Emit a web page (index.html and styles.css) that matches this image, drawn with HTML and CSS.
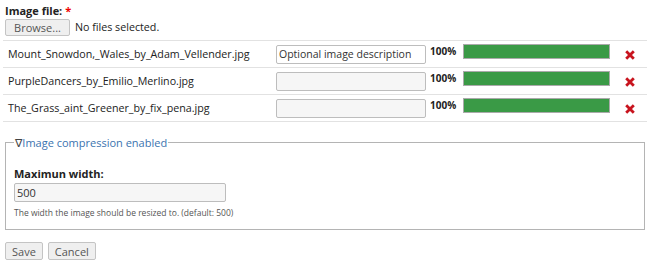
FILE: index.html
```html
<!DOCTYPE html>
<html>
<head>
<meta charset="utf-8">
<link rel="stylesheet" href="styles.css">
</head>
<body>
<div class="page">
  <div class="field">
    <div class="label">Image file: <span class="req">*</span></div>
    <div class="file-row">
      <button class="btn browse">Browse...</button>
      <span class="nofile">No files selected.</span>
    </div>
  </div>
  <div class="files">
    <div class="row">
      <div class="name">Mount_Snowdon,_Wales_by_Adam_Vellender.jpg</div>
      <input class="desc white" type="text" value="Optional image description">
      <div class="pct">100%</div>
      <div class="bar"><div class="fill" style="width:100%"></div></div>
      <div class="del"><svg width="10" height="10" viewBox="0 0 10 10"><path d="M1.2 1.2 L8.8 8.8 M8.8 1.2 L1.2 8.8" stroke="#c8141e" stroke-width="2.8" stroke-linecap="butt"/></svg></div>
    </div>
    <div class="row">
      <div class="name">PurpleDancers_by_Emilio_Merlino.jpg</div>
      <input class="desc" type="text" value="">
      <div class="pct">100%</div>
      <div class="bar"><div class="fill" style="width:100%"></div></div>
      <div class="del"><svg width="10" height="10" viewBox="0 0 10 10"><path d="M1.2 1.2 L8.8 8.8 M8.8 1.2 L1.2 8.8" stroke="#c8141e" stroke-width="2.8" stroke-linecap="butt"/></svg></div>
    </div>
    <div class="row">
      <div class="name">The_Grass_aint_Greener_by_fix_pena.jpg</div>
      <input class="desc" type="text" value="">
      <div class="pct">100%</div>
      <div class="bar"><div class="fill" style="width:100%"></div></div>
      <div class="del"><svg width="10" height="10" viewBox="0 0 10 10"><path d="M1.2 1.2 L8.8 8.8 M8.8 1.2 L1.2 8.8" stroke="#c8141e" stroke-width="2.8" stroke-linecap="butt"/></svg></div>
    </div>
  </div>
  <fieldset class="fs">
    <legend class="legend"><span class="tri">∇</span>Image compression enabled</legend>
    <div class="label">Maximun width:</div>
    <input class="width-input" type="text" value="500">
    <div class="help">The width the image should be resized to. (default: 500)</div>
  </fieldset>
  <div class="actions">
    <button class="btn">Save</button>
    <button class="btn">Cancel</button>
  </div>
</div>
</body>
</html>
```
FILE: styles.css
```css
* { box-sizing: border-box; }
body {
  margin: 0;
  font-family: "Open Sans", "DejaVu Sans", sans-serif;
  font-size: 10.7px;
  line-height: 15px;
  color: #222;
  background: #fff;
}
.page { padding: 3px 5px 0 5px; }
.label { font-weight: bold; line-height: 15px; font-size: 11px; }
.req { color: #e00; }
.file-row { display: flex; align-items: center; gap: 5px; margin-top: 1px; }
.btn {
  font-family: "Open Sans", "DejaVu Sans", sans-serif;
  font-size: 11px;
  color: #555;
  background: #efefef;
  border: 1px solid #c4c4c4;
  border-radius: 2px;
  height: 17px;
  padding: 0 6px;
  line-height: 15px;
}
.browse { width: 65px; padding: 0; }
.files { margin: 4px -2px 0 -2px; }
.row {
  display: grid;
  grid-template-columns: 273px 150px 37px 147px 1fr;
  align-items: center;
  height: 27px;
  border-top: 1px solid #e2e2e2;
}
.row:last-child { border-bottom: 1px solid #e2e2e2; height: 28px; }
.name { padding-left: 5px; white-space: nowrap; }
.desc {
  height: 19px;
  width: 150px;
  border: 1px solid #bdbdbd;
  border-radius: 2px;
  background: #f6f6f6;
  font-family: "Open Sans", "DejaVu Sans", sans-serif;
  font-size: 10.5px;
  padding: 0 3px 0 2px;
  color: #333;
}
.desc.white { background: #fff; }
.pct { font-weight: bold; font-size: 10px; padding-left: 4px; align-self: start; margin-top: 3px; }
.bar {
  height: 15px;
  border: 1px solid #aaa;
  background: #eee;
  align-self: start;
  margin-top: 3px;
}
.fill { height: 100%; background: #3a9a46; }
.del { padding-left: 15px; display: flex; align-items: center; padding-top: 2px; }
.fs {
  margin: 13px 0 0 0;
  padding: 2px 8px 9px 8px;
  border: 1px solid #b4b4b4;
  min-width: 0;
  width: 640px;
}
.legend { color: #3b73af; padding: 0 1px; font-size: 11px; }
.tri { font-size: 11px; color: #444; }
.fs .label { margin-top: 14px; }
.width-input {
  display: block;
  width: 212px;
  height: 19px;
  border: 1px solid #bdbdbd;
  border-radius: 2px;
  background: #f6f6f6;
  font-family: "Open Sans", "DejaVu Sans", sans-serif;
  font-size: 11px;
  padding: 0 3px 0 2px;
  color: #333;
  margin-top: 2px;
}
.help { font-size: 8.5px; color: #555; margin-top: 3px; }
.actions { display: flex; gap: 5px; margin-top: 12px; }
.actions .btn { height: 18px; }
```
